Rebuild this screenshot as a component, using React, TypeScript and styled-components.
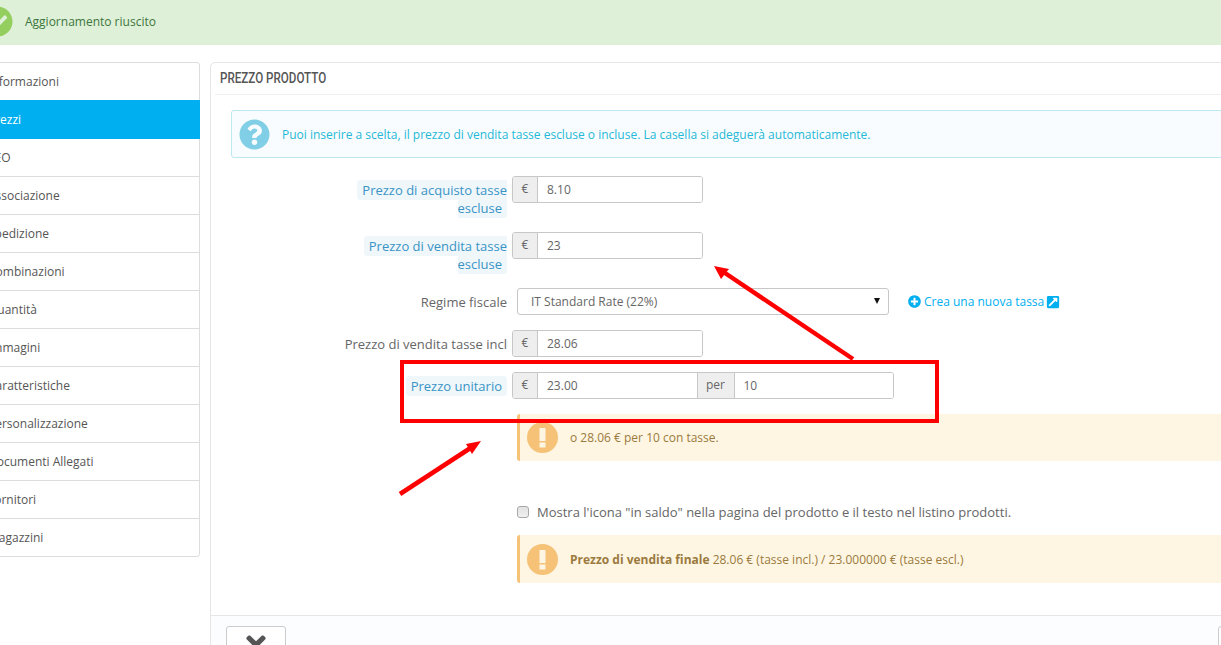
import React from 'react';
import styled, { createGlobalStyle } from 'styled-components';
import { FaCheckCircle, FaExternalLinkSquareAlt, FaPlusCircle, FaQuestionCircle, FaTimes } from 'react-icons/fa';

const GlobalStyle = createGlobalStyle`
  html, body {
    margin: 0;
    height: 645px;
    overflow: hidden;
    background: #fff;
  }
  body {
    font-family: "Open Sans", "Liberation Sans", sans-serif;
    font-size: 12px;
    color: #666;
  }
`;

/* the original page was scrolled sideways, so it runs off both edges */
const Page = styled.div`
  width: 1318px;
  margin-left: -24px;
`;

const SuccessBar = styled.div`
  height: 45px;
  background: #dff0d8;
  color: #3c763d;
  display: flex;
  align-items: center;
  gap: 12px;
  padding: 0 0 3px 6px;
  box-sizing: border-box;
  font-size: 12px;
  svg {
    font-size: 31px;
    color: #93ce5f;
  }
`;

const Columns = styled.div`
  display: flex;
  gap: 11px;
  margin-top: 17px;
  align-items: flex-start;
`;

const Side = styled.nav`
  width: 224px;
  flex: none;
  box-sizing: border-box;
  border: 1px solid #ddd;
  border-radius: 3px;
  background: #fff;
`;

const SideItem = styled.a<{ $active?: boolean }>`
  display: block;
  height: ${(p) => (p.$active ? 39 : 38)}px;
  box-sizing: border-box;
  padding: ${(p) => (p.$active ? 11 : 10)}px 11px 0;
  line-height: 18px;
  color: ${(p) => (p.$active ? '#fff' : '#555')};
  background: ${(p) => (p.$active ? '#00aff0' : 'transparent')};
  border-bottom: ${(p) => (p.$active ? 'none' : '1px solid #ddd')};
  margin-right: ${(p) => (p.$active ? -1 : 0)}px;
  &:first-child,
  &:last-child {
    height: 37px;
    border-bottom: none;
  }
`;

const Panel = styled.section`
  flex: 1;
  margin-left: -1px;
  border: 1px solid #e6e6e6;
  border-radius: 5px 5px 0 0;
  background: #fff;
  height: 600px;
  box-sizing: border-box;
`;

const PanelHead = styled.h3`
  margin: 0 0 0 4px;
  height: 32px;
  padding: 7px 0 0 5px;
  box-sizing: border-box;
  border-bottom: 1px solid #eee;
  font-family: "Roboto", "Liberation Sans", sans-serif;
  font-size: 14px;
  line-height: 16px;
  font-weight: 500;
  color: #555;
`;

const HeadText = styled.span`
  display: inline-block;
  transform: scaleX(0.83);
  transform-origin: left center;
`;

const PanelBody = styled.div`
  padding: 15px 15px 0 20px;
  height: 520px;
  box-sizing: border-box;
`;

const InfoBox = styled.div`
  height: 48px;
  box-sizing: border-box;
  border: 1px solid #bce8f1;
  border-radius: 3px;
  background: #f8fcfe;
  color: #25b9d7;
  display: flex;
  align-items: center;
  gap: 12px;
  padding-left: 7px;
  margin-bottom: 18px;
  svg {
    font-size: 31px;
    color: #81cfe6;
  }
`;

const Form = styled.div`
  display: grid;
  grid-template-columns: 170px 1fr;
  column-gap: 5px;
  row-gap: 15px;
  padding-left: 106px;
`;

const LabelCell = styled.label`
  text-align: right;
  line-height: 18px;
  font-size: 13px;
  padding-top: 5px;
  color: #666;
`;

const Hint = styled.span`
  background: #eff7fb;
  color: #3a94c5;
  border-radius: 3px;
  padding: 1px 5px;
`;

const InputGroup = styled.div<{ $wide?: boolean }>`
  display: flex;
  width: ${(p) => (p.$wide ? 382 : 191)}px;
  height: 27px;
  box-sizing: border-box;
  border: 1px solid #c7c7c7;
  border-radius: 3px;
  overflow: hidden;
`;

const Addon = styled.span<{ $w: number; $middle?: boolean }>`
  flex: none;
  width: ${(p) => p.$w}px;
  box-sizing: border-box;
  background: #eee;
  border-right: 1px solid #c7c7c7;
  border-left: ${(p) => (p.$middle ? '1px solid #c7c7c7' : 'none')};
  color: #666;
  display: flex;
  align-items: center;
  justify-content: center;
  padding-bottom: 3px;
`;

const Field = styled.input`
  flex: 1;
  min-width: 0;
  border: none;
  outline: none;
  padding: 0 0 0 9px;
  font: 12px "Open Sans", sans-serif;
  color: #666;
  background: #fff;
`;

const SelectRow = styled.div`
  display: flex;
  align-items: center;
  gap: 19px;
  padding-left: 5px;
`;

const SelectWrap = styled.div`
  position: relative;
  width: 372px;
  height: 27px;
  &::after {
    content: '';
    position: absolute;
    right: 9px;
    top: 10px;
    border: 3.5px solid transparent;
    border-top: 6px solid #111;
    border-bottom: none;
  }
`;

const Select = styled.select`
  appearance: none;
  width: 100%;
  height: 100%;
  box-sizing: border-box;
  border: 1px solid #c7c7c7;
  border-radius: 3px;
  background: #fff;
  padding: 0 0 0 13px;
  font: 12px "Open Sans", sans-serif;
  color: #666;
`;

const NewLink = styled.a`
  display: flex;
  align-items: center;
  gap: 2px;
  color: #00aff0;
  svg {
    font-size: 13px;
    margin-right: 1px;
  }
  svg:last-child {
    font-size: 14px;
    margin: 0;
  }
`;

const Notes = styled.div`
  padding-left: 286px;
  margin-top: 15px;
`;

const Warning = styled.div<{ $h: number }>`
  height: ${(p) => p.$h}px;
  box-sizing: border-box;
  border-left: 3px solid #f5c277;
  border-radius: 3px 0 0 3px;
  background: #fef6e2;
  color: #9b7a40;
  display: flex;
  align-items: center;
  gap: 12px;
  padding-left: 7px;
  b {
    font-weight: 700;
  }
`;

const CheckRow = styled.label`
  display: flex;
  align-items: center;
  gap: 8px;
  font-size: 13px;
  line-height: 18px;
  margin: 42px 0 14px;
  color: #666;
`;

const Check = styled.input`
  appearance: none;
  margin: 0;
  width: 12px;
  height: 12px;
  box-sizing: border-box;
  border: 1px solid #a8a8a8;
  border-radius: 3px;
  background: linear-gradient(#e2e2e2, #f0f0f0);
`;

const PanelFoot = styled.div`
  height: 60px;
  background: #fcfdfe;
  border-top: 1px solid #e6e6e6;
  padding: 10px 15px;
  display: flex;
  justify-content: space-between;
  box-sizing: border-box;
`;

const FootButton = styled.button`
  width: 60px;
  height: 50px;
  padding: 0;
  border: 1px solid #ccc;
  border-radius: 3px;
  background: #fff;
  color: #555;
  display: flex;
  align-items: flex-start;
  justify-content: center;
  svg {
    font-size: 28px;
    margin-top: 4px;
  }
`;

const Annotations = styled.svg`
  position: absolute;
  left: 0;
  top: 0;
  width: 1221px;
  height: 645px;
  pointer-events: none;
`;

function WarnIcon() {
  return (
    <svg width="31" height="31" viewBox="0 0 31 31" style={{ flex: 'none' }}>
      <circle cx="15.5" cy="15.5" r="15.5" fill="#f5c277" />
      <rect x="12.5" y="6" width="6" height="13" fill="#fef6e2" />
      <rect x="12.5" y="20.5" width="6" height="5" fill="#fef6e2" />
    </svg>
  );
}

const sideItems = [
  'Informazioni', 'Prezzi', 'SEO', 'Associazione', 'Spedizione', 'Combinazioni', 'Quantità',
  'Immagini', 'Caratteristiche', 'Personalizzazione', 'Documenti Allegati', 'Fornitori', 'Magazzini',
];

export default function App() {
  return (
    <>
      <GlobalStyle />
      <Page>
        <SuccessBar>
          <FaCheckCircle />
          Aggiornamento riuscito
        </SuccessBar>
        <Columns>
          <Side>
            {sideItems.map((item) => (
              <SideItem key={item} $active={item === 'Prezzi'}>{item}</SideItem>
            ))}
          </Side>
          <Panel>
            <PanelHead><HeadText>PREZZO PRODOTTO</HeadText></PanelHead>
            <PanelBody>
              <InfoBox>
                <FaQuestionCircle />
                Puoi inserire a scelta, il prezzo di vendita tasse escluse o incluse. La casella si adeguerà automaticamente.
              </InfoBox>
              <Form>
                <LabelCell><Hint>Prezzo di acquisto tasse escluse</Hint></LabelCell>
                <InputGroup>
                  <Addon $w={25}>€</Addon>
                  <Field defaultValue="8.10" />
                </InputGroup>

                <LabelCell><Hint>Prezzo di vendita tasse escluse</Hint></LabelCell>
                <InputGroup>
                  <Addon $w={25}>€</Addon>
                  <Field defaultValue="23" />
                </InputGroup>

                <LabelCell>Regime fiscale</LabelCell>
                <SelectRow>
                  <SelectWrap>
                    <Select defaultValue="it22">
                      <option value="it22">IT Standard Rate (22%)</option>
                    </Select>
                  </SelectWrap>
                  <NewLink>
                    <FaPlusCircle />
                    Crea una nuova tassa
                    <FaExternalLinkSquareAlt />
                  </NewLink>
                </SelectRow>

                <LabelCell>Prezzo di vendita tasse incl</LabelCell>
                <InputGroup>
                  <Addon $w={25}>€</Addon>
                  <Field defaultValue="28.06" />
                </InputGroup>

                <LabelCell><Hint>Prezzo unitario</Hint></LabelCell>
                <InputGroup $wide>
                  <Addon $w={25}>€</Addon>
                  <Field defaultValue="23.00" />
                  <Addon $w={38} $middle>per</Addon>
                  <Field defaultValue="10" />
                </InputGroup>
              </Form>
              <Notes>
                <Warning $h={47}>
                  <WarnIcon />
                  o 28.06 € per 10 con tasse.
                </Warning>
                <CheckRow>
                  <Check type="checkbox" />
                  Mostra l'icona "in saldo" nella pagina del prodotto e il testo nel listino prodotti.
                </CheckRow>
                <Warning $h={48}>
                  <WarnIcon />
                  <span><b>Prezzo di vendita finale</b> 28.06 € (tasse incl.) / 23.000000 € (tasse escl.)</span>
                </Warning>
              </Notes>
            </PanelBody>
            <PanelFoot>
              <FootButton><FaTimes /></FootButton>
              <FootButton />
            </PanelFoot>
          </Panel>
        </Columns>
      </Page>
      <Annotations viewBox="0 0 1221 645">
        <rect x="402" y="362" width="535" height="59" fill="none" stroke="#ff0000" strokeWidth="4" />
        <line x1="853" y1="359" x2="722" y2="271" stroke="#ff0000" strokeWidth="4.5" />
        <polygon points="714,266 729,269 721,279" fill="#ff0000" />
        <line x1="400" y1="494" x2="472" y2="447" stroke="#ff0000" strokeWidth="4.5" />
        <polygon points="481,441 466,444 472,454" fill="#ff0000" />
      </Annotations>
    </>
  );
}
